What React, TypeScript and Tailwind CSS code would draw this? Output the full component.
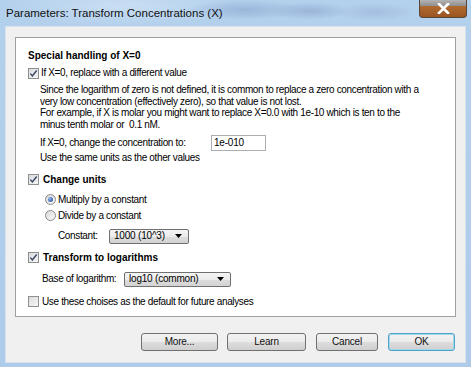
import React from "react";

function Check({ checked }: { checked: boolean }) {
  return (
    <span className="w-[11px] h-[11px] shrink-0 border border-[#8e8f8f] bg-[linear-gradient(135deg,#dcdcdc,#f7f7f7)] flex items-center justify-center">
      {checked && (
        <svg width="9" height="9" viewBox="0 0 9 9">
          <path d="M1.4 4.6 L3.4 7 L7.7 1.5" fill="none" stroke="#34425f" strokeWidth="1.4" />
        </svg>
      )}
    </span>
  );
}

function Radio({ checked }: { checked: boolean }) {
  return (
    <span className="w-[11px] h-[11px] shrink-0 rounded-full border border-[#8a8a8a] bg-[linear-gradient(135deg,#d8d8d8,#fafafa)] flex items-center justify-center">
      {checked && <span className="w-[5px] h-[5px] rounded-full bg-[radial-gradient(circle_at_35%_35%,#8fb4f0,#1d3f8f)]" />}
    </span>
  );
}

function Select({ value, w }: { value: string; w: string }) {
  return (
    <div className={`${w} h-[15px] border border-[#707070] rounded-[2px] bg-[linear-gradient(to_bottom,#f4f4f4_0%,#ebebeb_50%,#dddddd_51%,#d3d3d3_100%)] flex items-center justify-between pl-[4px] pr-[6px]`}>
      <span className="text-[10px] leading-[12px] tracking-[-0.2px]">{value}</span>
      <svg width="7" height="4" viewBox="0 0 7 4">
        <path d="M0 0 H7 L3.5 4 Z" fill="#000" />
      </svg>
    </div>
  );
}

function Btn({ label, w, focus }: { label: string; w: string; focus?: boolean }) {
  return (
    <div
      className={`${w} h-[18px] rounded-[3px] border ${
        focus ? "border-[#4fa3c7] shadow-[inset_0_0_0_1px_#9fd9ec]" : "border-[#707070]"
      } bg-[linear-gradient(to_bottom,#f2f2f2_0%,#ebebeb_50%,#dddddd_51%,#cfcfcf_100%)] flex items-center justify-center text-[10px] leading-[12px] tracking-[-0.2px] text-[#111]`}
    >
      {label}
    </div>
  );
}

export default function App() {
  const body = "text-[10px] leading-[12px] tracking-[-0.35px]";
  return (
    <div className="w-[471px] h-[367px] overflow-hidden flex flex-col font-['Liberation_Sans',Arial,sans-serif] text-black bg-[radial-gradient(ellipse_60px_10px_at_245px_10px,#9bb6da_0%,transparent_100%),radial-gradient(ellipse_40px_9px_at_310px_11px,#9ab4d8_0%,transparent_100%),radial-gradient(ellipse_40px_9px_at_375px_12px,#a4bde0_0%,transparent_100%),radial-gradient(ellipse_120px_20px_at_120px_6px,#c9def3_0%,transparent_100%),linear-gradient(to_bottom,#b3d0ec,#aecbe9)]">
      <div className="h-[26px] shrink-0 flex items-start justify-between">
        <div className="pl-[6px] pt-[6px] text-[11.5px] leading-[14px] text-[#111]">
          Parameters: Transform Concentrations (X)
        </div>
        <div className="mr-[4px] w-[48px] h-[18px] rounded-b-[4px] border border-t-0 border-[#5b4535] bg-[linear-gradient(to_bottom,#b4b4b4_0%,#8f8f8f_34%,#b06a30_38%,#9a5522_100%)] flex items-center justify-center">
          <svg width="13" height="11" viewBox="0 0 13 11">
            <path d="M2 1 L11 10 M11 1 L2 10" stroke="#fff" strokeWidth="2.6" strokeLinecap="square" />
          </svg>
        </div>
      </div>
      <div className="ml-[5px] w-[461px] h-[337px] shrink-0 border border-[#d8e2ec] bg-[#f0f0f0] flex flex-col">
        <div className="ml-[9px] mt-[10px] w-[441px] h-[280px] border border-[#a0a0a0] bg-white flex flex-col pl-[12px] pt-[12px]">
          <div className="text-[10px] leading-[12px] font-bold">Special handling of X=0</div>
          <div className="mt-[5px] flex items-center gap-[2px]">
            <Check checked />
            <span className={body}>If X=0, replace with a different value</span>
          </div>
          <div className={`ml-[12px] mt-[5px] text-[10px] leading-[11.7px] tracking-[-0.35px]`}>
            <div>Since the logarithm of zero is not defined, it is common to replace a zero concentration with a</div>
            <div>very low concentration (effectively zero), so that value is not lost.</div>
            <div>For example, if X is molar you might want to replace X=0.0 with 1e-10 which is ten to the</div>
            <div>minus tenth molar or&nbsp; 0.1 nM.</div>
          </div>
          <div className="ml-[12px] mt-[4px] flex items-center">
            <span className={`${body} w-[171px]`}>If X=0, change the concentration to:</span>
            <div className="w-[55px] h-[16px] border border-[#abadb3] bg-white flex items-center pl-[2px] text-[10px] leading-[12px] tracking-[-0.2px]">
              1e-010
            </div>
          </div>
          <div className={`ml-[12px] mt-[1px] ${body}`}>Use the same units as the other values</div>
          <div className="mt-[10px] flex items-center gap-[4px]">
            <Check checked />
            <span className="text-[10px] leading-[12px] font-bold">Change units</span>
          </div>
          <div className="ml-[17px] mt-[8px] flex items-center gap-[2px]">
            <Radio checked />
            <span className={body}>Multiply by a constant</span>
          </div>
          <div className="ml-[17px] mt-[4px] flex items-center gap-[2px]">
            <Radio checked={false} />
            <span className={body}>Divide by a constant</span>
          </div>
          <div className="ml-[30px] mt-[7px] flex items-center">
            <span className={`${body} w-[51px]`}>Constant:</span>
            <Select value="1000 (10^3)" w="w-[80px]" />
          </div>
          <div className="mt-[8px] flex items-center gap-[4px]">
            <Check checked />
            <span className="text-[10px] leading-[12px] font-bold">Transform to logarithms</span>
          </div>
          <div className="ml-[14px] mt-[8px] flex items-center">
            <span className={`${body} w-[82px]`}>Base of logarithm:</span>
            <Select value="log10 (common)" w="w-[107px]" />
          </div>
          <div className="mt-[9px] flex items-center gap-[3px]">
            <Check checked={false} />
            <span className={body}>Use these choises as the default for future analyses</span>
          </div>
        </div>
        <div className="ml-[135px] mt-[16px] flex items-center">
          <Btn label="More..." w="w-[77px]" />
          <div className="w-[9px]" />
          <Btn label="Learn" w="w-[79px]" />
          <div className="w-[10px]" />
          <Btn label="Cancel" w="w-[62px]" />
          <div className="w-[10px]" />
          <Btn label="OK" w="w-[67px]" focus />
        </div>
      </div>
    </div>
  );
}
